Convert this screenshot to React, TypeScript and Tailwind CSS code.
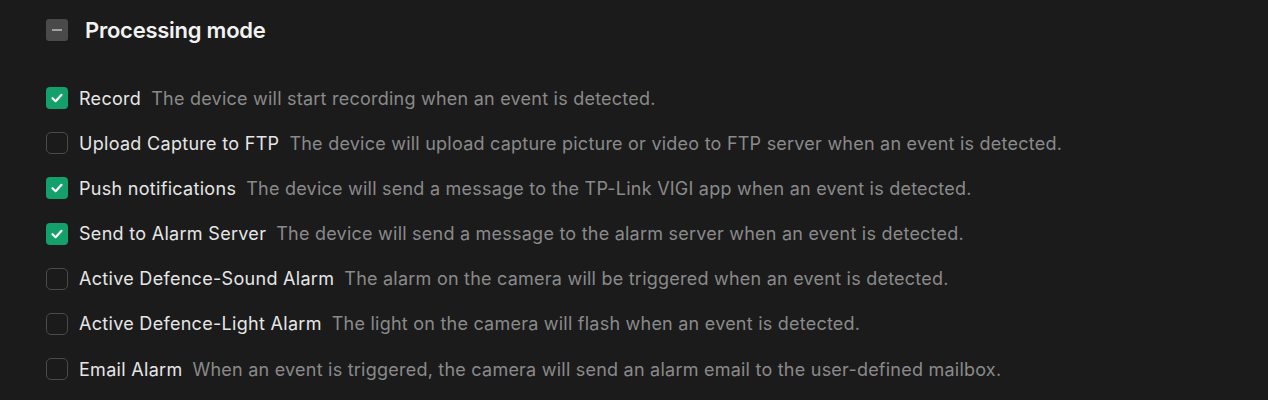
import React from "react";

const items = [
  { label: "Record", desc: "The device will start recording when an event is detected.", checked: true },
  { label: "Upload Capture to FTP", desc: "The device will upload capture picture or video to FTP server when an event is detected.", checked: false },
  { label: "Push notifications", desc: "The device will send a message to the TP-Link VIGI app when an event is detected.", checked: true },
  { label: "Send to Alarm Server", desc: "The device will send a message to the alarm server when an event is detected.", checked: true },
  { label: "Active Defence-Sound Alarm", desc: "The alarm on the camera will be triggered when an event is detected.", checked: false },
  { label: "Active Defence-Light Alarm", desc: "The light on the camera will flash when an event is detected.", checked: false },
  { label: "Email Alarm", desc: "When an event is triggered, the camera will send an alarm email to the user-defined mailbox.", checked: false },
];

function Box({ checked }: { checked: boolean }) {
  if (checked) {
    return (
      <div className="w-[22px] h-[22px] rounded-[4px] bg-[#14a06a] flex items-center justify-center shrink-0">
        <svg width="14" height="14" viewBox="0 0 14 14" fill="none">
          <path d="M2.5 7.2 L5.6 10.2 L11.5 3.8" stroke="#ffffff" strokeWidth="2.2" strokeLinecap="round" strokeLinejoin="round" />
        </svg>
      </div>
    );
  }
  return <div className="w-[22px] h-[22px] rounded-[5px] border-[1.5px] border-[#4a4a4a] shrink-0" />;
}

export default function App() {
  return (
    <div className="w-[1268px] h-[400px] bg-[#1b1b1b] pl-[46px] pt-[19px]" style={{ fontFamily: "Inter, 'Noto Sans', sans-serif" }}>
      <div className="flex items-center gap-[17px] h-[22px]">
        <div className="w-[22px] h-[22px] rounded-[3px] bg-[#4a4a4a] flex items-center justify-center">
          <div className="w-[10px] h-[2px] bg-[#a0a0a0]" />
        </div>
        <span className="text-[22px] font-semibold text-[#f2f2f2] tracking-[-0.25px]">Processing mode</span>
      </div>
      <div className="flex flex-col gap-[23.2px] mt-[46px]">
        {items.map((it) => (
          <div key={it.label} className="flex items-center h-[22px]">
            <Box checked={it.checked} />
            <span className="ml-[11px] text-[18px] font-normal text-[#e6e6e6] tracking-[0.3px] whitespace-nowrap">{it.label}</span>
            <span className="ml-[10px] text-[18px] text-[#8a8a8a] tracking-[0.23px] whitespace-nowrap">{it.desc}</span>
          </div>
        ))}
      </div>
    </div>
  );
}
